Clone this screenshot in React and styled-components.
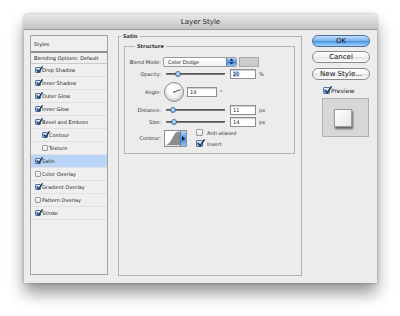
import React from "react";
import styled, { createGlobalStyle } from "styled-components";

const Global = createGlobalStyle`
  html, body { margin: 0; padding: 0; background: #ffffff; }
  body { font-family: "DejaVu Sans", "Liberation Sans", sans-serif; color: #222; }
`;

const Page = styled.div`
  width: 400px;
  height: 316px;
  padding: 14px 23px 0 24px;
  box-sizing: border-box;
  overflow: hidden;
`;

const Window = styled.div`
  width: 353px;
  height: 269px;
  background: #ececec;
  border-radius: 4px 4px 0 0;
  box-shadow: 0 10px 16px rgba(0, 0, 0, 0.42), 0 0 3px rgba(0, 0, 0, 0.3);
  display: flex;
  flex-direction: column;
`;

const TitleBar = styled.div`
  height: 15px;
  flex: none;
  background: linear-gradient(#e8e8e8, #c4c4c4);
  border-bottom: 1px solid #9a9a9a;
  border-radius: 4px 4px 0 0;
  display: flex;
  align-items: center;
  justify-content: center;
  font-size: 7px;
  color: #2a2a2a;
`;

const Body = styled.div`
  display: flex;
  align-items: flex-start;
  padding: 0 7px 0 6px;
`;

/* ---------- left list ---------- */

const StyleList = styled.div`
  width: 78px;
  height: 240px;
  margin-top: 5px;
  box-sizing: border-box;
  border: 1px solid #a2a2a2;
  background: #efefef;
  font-size: 5px;
`;

const ListHead = styled.div`
  height: 15px;
  display: flex;
  align-items: center;
  padding-left: 3px;
  border-bottom: 2px solid #8e8e8e;
`;

const Blending = styled.div`
  height: 11px;
  box-sizing: border-box;
  display: flex;
  align-items: center;
  padding-left: 3px;
  border-bottom: 1px solid #c9c9c9;
`;

const ListRow = styled.div`
  height: 13px;
  box-sizing: border-box;
  display: flex;
  align-items: center;
  gap: 1px;
  padding-left: ${(p) => (p.$indent ? 11 : 4)}px;
  border-bottom: 1px solid #e0e0e0;
  background: ${(p) => (p.$active ? "#b9d4f6" : "transparent")};
`;

/* ---------- checkbox ---------- */

const Box = styled.span`
  position: relative;
  flex: none;
  display: inline-block;
  width: ${(p) => p.$size}px;
  height: ${(p) => p.$size}px;
  box-sizing: border-box;
  border-radius: 1px;
  border: 1px solid ${(p) => (p.$checked ? "#51739c" : "#9c9c9c")};
  background: ${(p) =>
    p.$checked
      ? "linear-gradient(#e3eefa, #8fb3df)"
      : "linear-gradient(#ffffff, #e2e2e2)"};
`;

const Tick = styled.svg`
  position: absolute;
  left: 0;
  top: -2px;
`;

const CheckBox = ({ checked, size = 6 }) => (
  <Box $checked={checked} $size={size}>
    {checked && (
      <Tick width={size + 1} height={size + 1} viewBox="0 0 10 10">
        <path
          d="M1.5 5.5 L4 8.5 L9 1"
          fill="none"
          stroke="#1c3659"
          strokeWidth="1.9"
          strokeLinecap="round"
        />
      </Tick>
    )}
  </Box>
);

/* ---------- middle group boxes ---------- */

const Group = styled.fieldset`
  width: 184px;
  height: 243px;
  box-sizing: border-box;
  margin: 3px 0 0 10px;
  padding: 0 6px 0 5px;
  border: 1px solid #b2b2b2;
  min-inline-size: 0;
`;

const Legend = styled.legend`
  font-size: 5px;
  font-weight: bold;
  line-height: 6px;
  padding: 0 2px;
  margin-left: ${(p) => p.$offset}px;
  color: #333;
`;

const Inner = styled.fieldset`
  margin: 4px 0 0 0;
  padding: 7px 4px 4px 1px;
  border: 1px solid #b2b2b2;
  min-inline-size: 0;
`;

const Row = styled.div`
  height: ${(p) => p.$h}px;
  display: flex;
  align-items: center;
  font-size: 5px;
`;

const Label = styled.span`
  width: 35px;
  flex: none;
  text-align: right;
  color: #333;
`;

const Select = styled.div`
  width: 74px;
  height: 10px;
  margin-left: 2px;
  box-sizing: border-box;
  border: 1px solid #9a9a9a;
  border-radius: 2px;
  background: linear-gradient(#ffffff, #f1f1f1);
  display: flex;
  align-items: center;
  justify-content: space-between;
  padding-left: 4px;
  overflow: hidden;
`;

const SelectArrow = styled.span`
  width: 9px;
  height: 100%;
  display: flex;
  align-items: center;
  justify-content: center;
  background: linear-gradient(#b4d5f6, #4f97e4 50%, #3a86dc 51%, #93c6f3);
  border-left: 1px solid #5a7ea8;
`;

const Swatch = styled.div`
  width: 20px;
  height: 10px;
  margin-left: 2px;
  box-sizing: border-box;
  border: 1px solid #a9a9a9;
  background: #cbcbcb;
`;

const Track = styled.div`
  position: relative;
  width: 59px;
  height: 2px;
  margin-left: 5px;
  border-radius: 1px;
  background: #7c7c7c;
  box-shadow: inset 0 1px 0 #555;
`;

const Thumb = styled.span`
  position: absolute;
  top: -2px;
  width: 6px;
  height: 6px;
  border-radius: 50%;
  box-sizing: border-box;
  border: 1px solid #4b6f9c;
  background: radial-gradient(circle at 50% 35%, #d8ebfd, #5d9fe4);
`;

const Field = styled.div`
  width: ${(p) => p.$w}px;
  height: 10px;
  margin-left: ${(p) => p.$gap}px;
  box-sizing: border-box;
  border: 1px solid #8e8e8e;
  box-shadow: inset 0 1px 1px rgba(0, 0, 0, 0.2);
  background: #fff;
  display: flex;
  align-items: center;
  padding-left: 2px;
`;

const Selected = styled.span`
  background: #b5d4fb;
`;

const Unit = styled.span`
  margin-left: 3px;
  color: #333;
`;

const Dial = styled.div`
  width: 20px;
  height: 20px;
  margin-left: 3px;
  box-sizing: border-box;
  border-radius: 50%;
  border: 1px solid #8b8b8b;
  background: radial-gradient(circle at 40% 35%, #ffffff 20%, #d4d4d4);
  box-shadow: inset 0 -1px 2px rgba(0, 0, 0, 0.15);
`;

const ContourPick = styled.div`
  width: 23px;
  height: 17px;
  margin-left: 3px;
  box-sizing: border-box;
  border: 1px solid #8e8e8e;
  display: flex;
  background: #fff;
`;

const ContourArrow = styled.span`
  width: 5px;
  display: flex;
  align-items: center;
  justify-content: center;
  background: linear-gradient(#b4d5f6, #4f97e4 50%, #3a86dc 51%, #93c6f3);
  border-left: 1px solid #5a7ea8;
`;

const Options = styled.div`
  margin-left: 9px;
  display: flex;
  flex-direction: column;
  gap: 4px;
`;

const Option = styled.label`
  display: flex;
  align-items: center;
  gap: 4px;
  font-size: 5px;
  color: #333;
`;

/* ---------- right column ---------- */

const Side = styled.div`
  width: 58px;
  margin: 5px 0 0 10px;
  display: flex;
  flex-direction: column;
`;

const Button = styled.div`
  height: 12px;
  margin-top: ${(p) => p.$mt}px;
  box-sizing: border-box;
  border-radius: 6px;
  border: 1px solid ${(p) => (p.$primary ? "#4a6f9e" : "#8a8a8a")};
  background: ${(p) =>
    p.$primary
      ? "linear-gradient(#c6e1fb, #71aeeb 50%, #4d95e2 52%, #9fd0fa)"
      : "linear-gradient(#ffffff, #f3f3f3 50%, #e4e4e4 52%, #fbfbfb)"};
  display: flex;
  align-items: center;
  justify-content: center;
  font-size: 7px;
  color: #111;
`;

const PreviewRow = styled.label`
  height: 8px;
  margin: 6px 0 0 11px;
  display: flex;
  align-items: center;
  gap: 1px;
  font-size: 6px;
  color: #222;
`;

const Thumbnail = styled.div`
  width: 47px;
  height: 39px;
  margin: 4px 0 0 10px;
  box-sizing: border-box;
  border: 1px solid #b0b0b0;
  background: #d7d7d7;
  display: flex;
  align-items: center;
  justify-content: center;
  padding-right: 6px;
`;

const Swatchlet = styled.div`
  width: 18px;
  height: 18px;
  box-sizing: border-box;
  border: 1px solid #9a9a9a;
  background: linear-gradient(135deg, #ffffff, #e6e6e6);
  box-shadow: 1px 2px 2px rgba(0, 0, 0, 0.55);
`;

const Updown = () => (
  <svg width="5" height="7" viewBox="0 0 5 7">
    <path d="M2.5 0.5 L4.5 2.8 L0.5 2.8 Z M2.5 6.5 L4.5 4.2 L0.5 4.2 Z" fill="#0f1f3a" />
  </svg>
);

const items = [
  { name: "Drop Shadow", on: true },
  { name: "Inner Shadow", on: true },
  { name: "Outer Glow", on: true },
  { name: "Inner Glow", on: true },
  { name: "Bevel and Emboss", on: true },
  { name: "Contour", on: true, indent: true },
  { name: "Texture", on: false, indent: true },
  { name: "Satin", on: true, active: true },
  { name: "Color Overlay", on: false },
  { name: "Gradient Overlay", on: true },
  { name: "Pattern Overlay", on: false },
  { name: "Stroke", on: true },
];

const Slider = ({ at }) => (
  <Track>
    <Thumb style={{ left: at }} />
  </Track>
);

export default function App() {
  return (
    <Page>
      <Global />
      <Window>
        <TitleBar>Layer Style</TitleBar>
        <Body>
          <StyleList>
            <ListHead>Styles</ListHead>
            <Blending>Blending Options: Default</Blending>
            {items.map((it) => (
              <ListRow key={it.name} $indent={it.indent} $active={it.active}>
                <CheckBox checked={it.on} />
                <span>{it.name}</span>
              </ListRow>
            ))}
          </StyleList>

          <Group>
            <Legend $offset={-3}>Satin</Legend>
            <Inner>
              <Legend $offset={9}>Structure</Legend>
              <Row $h={11}>
                <Label>Blend Mode:</Label>
                <Select>
                  <span>Color Dodge</span>
                  <SelectArrow>
                    <Updown />
                  </SelectArrow>
                </Select>
                <Swatch />
              </Row>
              <Row $h={14}>
                <Label>Opacity:</Label>
                <Slider at={9} />
                <Field $w={26} $gap={5}>
                  <Selected>20</Selected>
                </Field>
                <Unit>%</Unit>
              </Row>
              <Row $h={22}>
                <Label>Angle:</Label>
                <Dial>
                  <svg width="18" height="18" viewBox="0 0 18 18">
                    <line x1="9" y1="9" x2="15.6" y2="6.7" stroke="#333" strokeWidth="0.8" />
                    <circle cx="9" cy="9" r="0.8" fill="#333" />
                  </svg>
                </Dial>
                <Field $w={30} $gap={3}>19</Field>
                <Unit>°</Unit>
              </Row>
              <Row $h={14}>
                <Label>Distance:</Label>
                <Slider at={4} />
                <Field $w={26} $gap={5}>11</Field>
                <Unit>px</Unit>
              </Row>
              <Row $h={10}>
                <Label>Size:</Label>
                <Slider at={5} />
                <Field $w={26} $gap={5}>14</Field>
                <Unit>px</Unit>
              </Row>
              <Row $h={22}>
                <Label>Contour:</Label>
                <ContourPick>
                  <svg width="17" height="15" viewBox="0 0 17 15">
                    <path d="M0 15 C7 14 9 2 13 0 L17 0 L17 15 Z" fill="#8d8d8d" />
                  </svg>
                  <ContourArrow>
                    <svg width="3" height="5" viewBox="0 0 3 5">
                      <path d="M0 0 L3 2.5 L0 5 Z" fill="#0f1f3a" />
                    </svg>
                  </ContourArrow>
                </ContourPick>
                <Options>
                  <Option>
                    <CheckBox checked={false} size={7} />
                    Anti-aliased
                  </Option>
                  <Option>
                    <CheckBox checked size={7} />
                    Invert
                  </Option>
                </Options>
              </Row>
            </Inner>
          </Group>

          <Side>
            <Button $primary $mt={0}>OK</Button>
            <Button $mt={4}>Cancel</Button>
            <Button $mt={5}>New Style...</Button>
            <PreviewRow>
              <CheckBox checked size={7} />
              Preview
            </PreviewRow>
            <Thumbnail>
              <Swatchlet />
            </Thumbnail>
          </Side>
        </Body>
      </Window>
    </Page>
  );
}
